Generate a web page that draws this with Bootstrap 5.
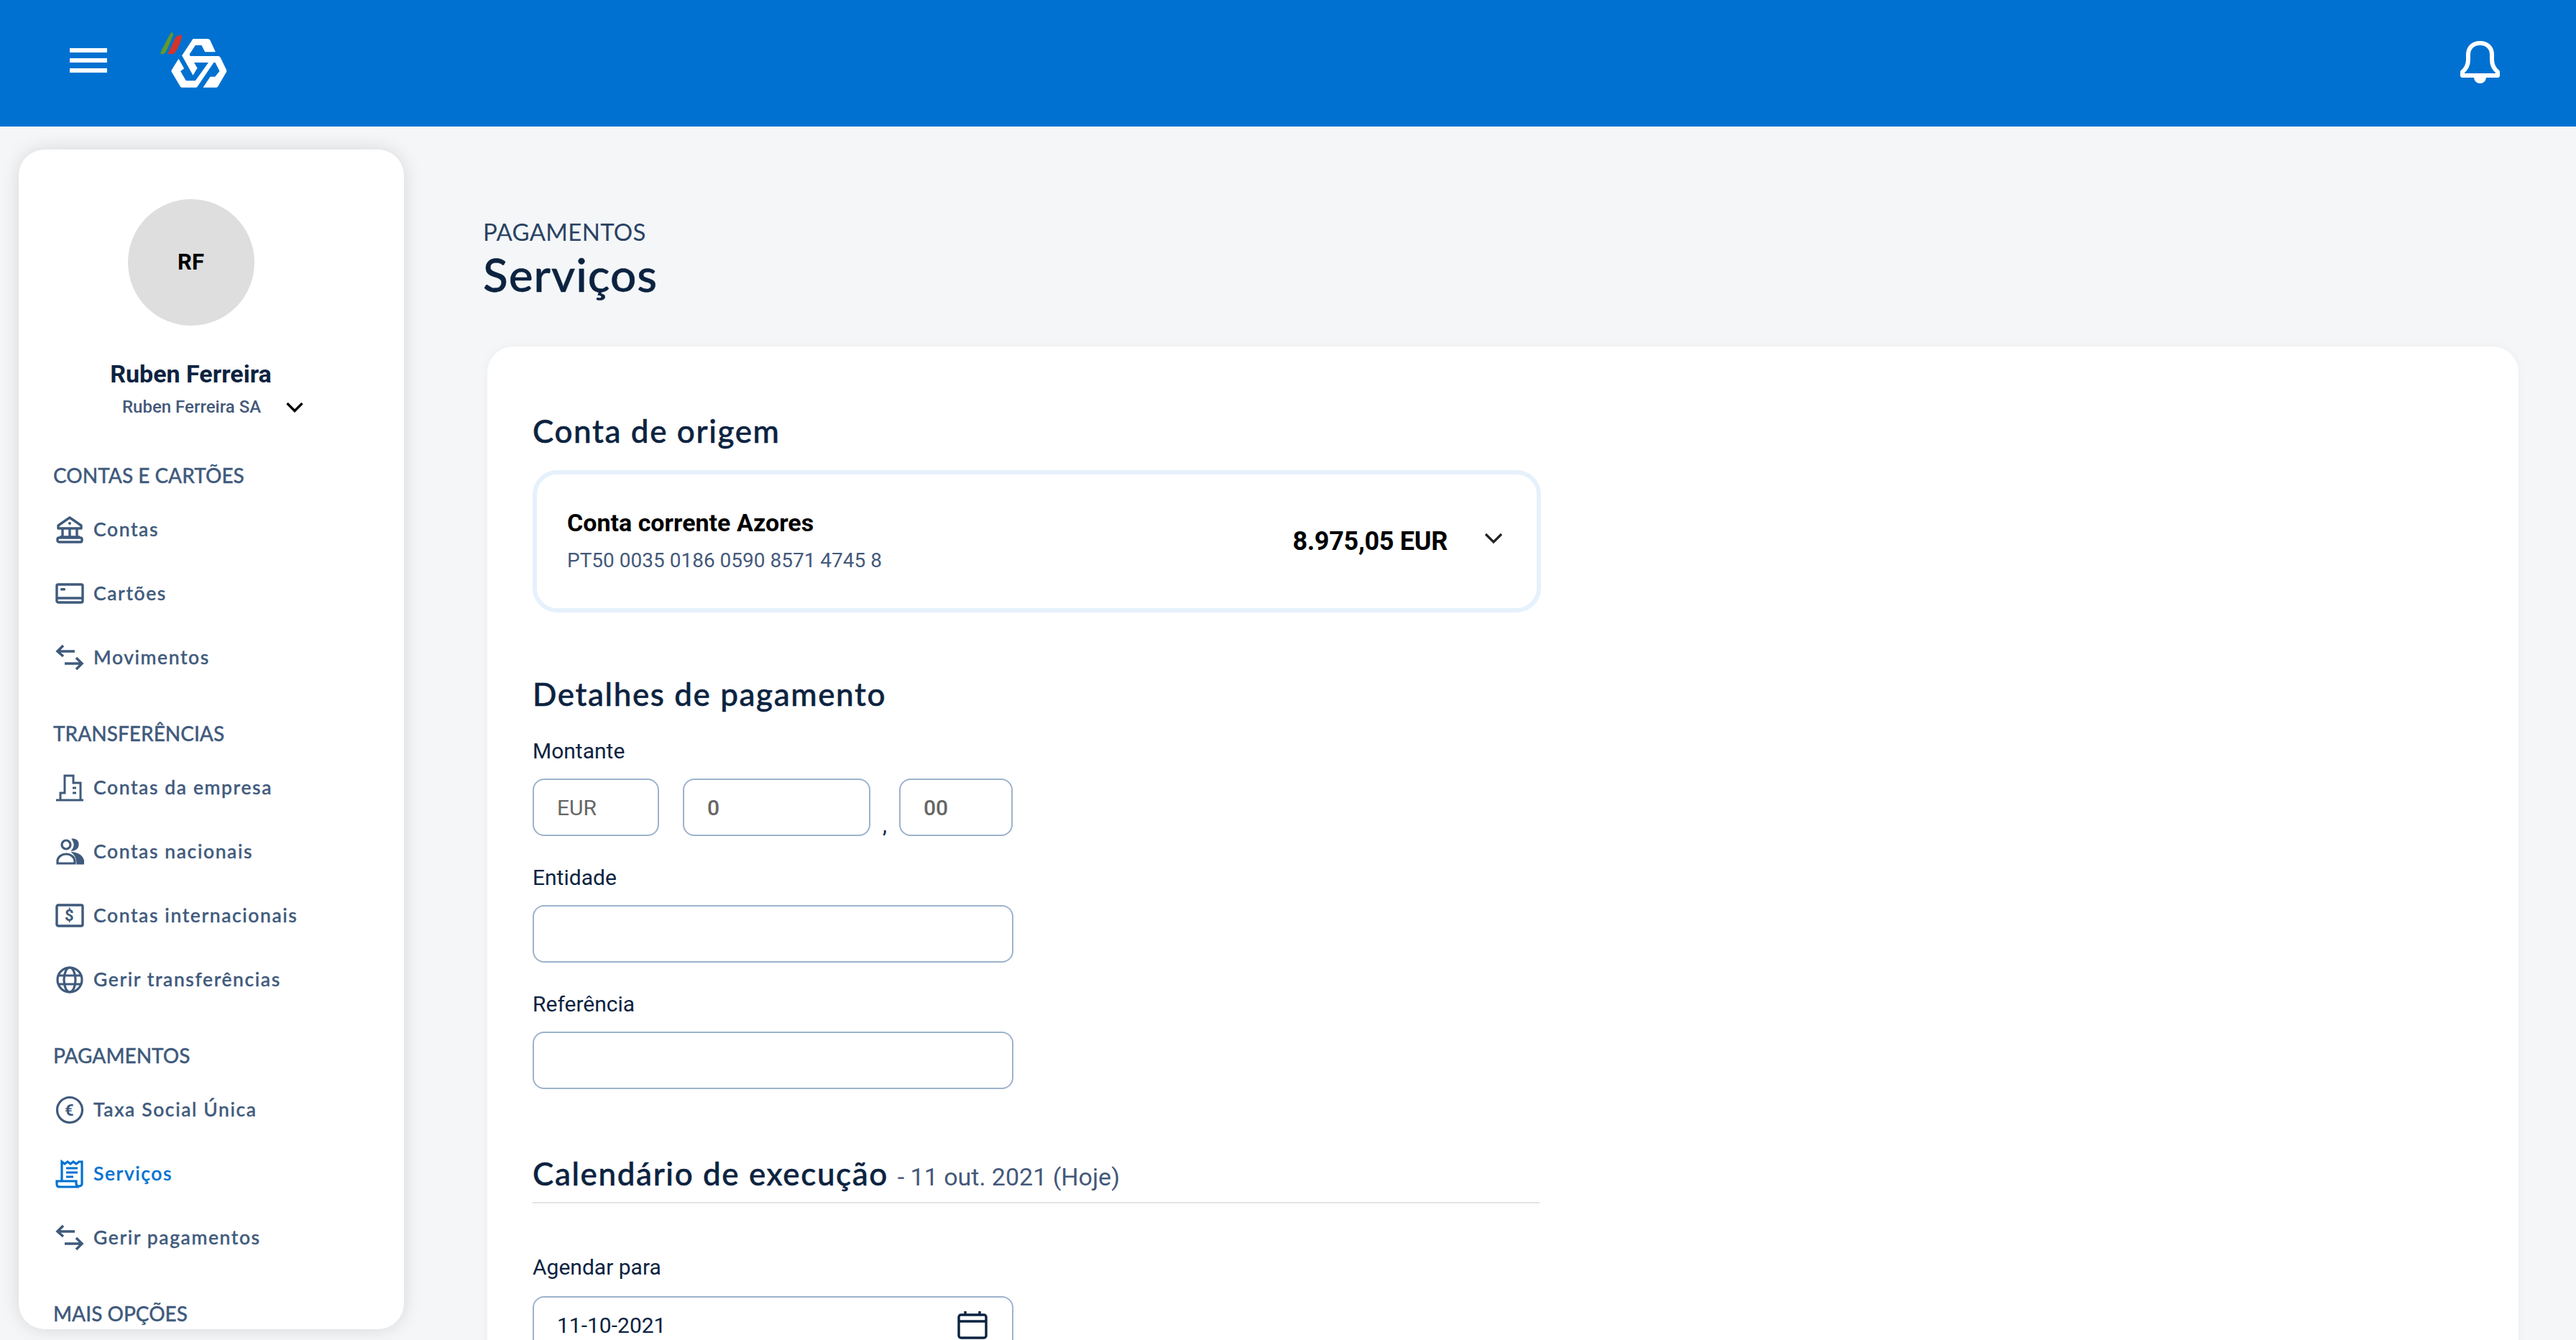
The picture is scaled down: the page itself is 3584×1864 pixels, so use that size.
<!DOCTYPE html>
<html lang="pt">
<head>
  <meta charset="UTF-8" />
  <meta name="viewport" content="width=device-width, initial-scale=1.0">
  <title>Serviços</title>
  <link href="https://cdn.jsdelivr.net/npm/bootstrap@5.3.0/dist/css/bootstrap.min.css" rel="stylesheet">
  <style>
    html, body { height: 1864px; overflow: hidden; }
    body { background: #f4f6f8; color: #0c2340; font-family: Roboto, "Liberation Sans", sans-serif; }
    .geo { font-family: Lato, "Noto Sans", sans-serif; }

    .app-bar { background: #0071d1; height: 176px; padding: 0 106px 8px 97px; }
    .burger { width: 52px; display: flex; flex-direction: column; gap: 8px; }
    .burger span { display: block; height: 6px; background: #fff; }
    .logo-mark { margin-left: 74px; }
    .bell-mark { margin-top: 8px; }

    .side-panel { width: 536px; height: 1641px; margin: 32px 0 0 26px; border: 0; border-radius: 36px; overflow: hidden; flex-shrink: 0; box-shadow: 0 0 26px rgba(0,0,0,.13); }
    .side-panel > * { flex-shrink: 0; }
    .profile { padding: 69px 57px 0 0; text-align: center; }
    .avatar { width: 176px; height: 176px; border-radius: 50%; background: #dedede; color: #000; font-size: 31px; font-weight: 700; }
    .user-name { margin-top: 47px; font-size: 34px; line-height: 40px; font-weight: 700; }
    .user-sub { margin-top: 11px; padding-left: 144px; gap: 35px; font-size: 24px; line-height: 30px; font-weight: 500; color: #44597a; }
    .menu-title { margin: 43px 0 13px 48px; font-size: 28px; line-height: 36px; color: #3f5a7c; font-weight: 500; -webkit-text-stroke: .3px #3f5a7c; }
    .menu-title.first { margin-top: 62px; }
    .menu-row { height: 89px; padding-left: 51px; gap: 13px; font-size: 26.5px; letter-spacing: 1.6px; color: #3f5a7c; font-weight: 500; text-decoration: none; -webkit-text-stroke: .4px currentColor; }
    .menu-row.on { color: #0071d1; }
    .menu-row svg { width: 40px; height: 40px; flex-shrink: 0; -webkit-text-stroke: 0; }

    .content { padding: 126px 80px 0 110px; min-width: 0; flex-grow: 1; }
    .crumb { font-size: 33px; line-height: 40px; color: #2a4263; letter-spacing: .3px; }
    .page-name { font-size: 64px; line-height: 70px; font-weight: 500; margin: 5px 0 0; color: #0c2340; letter-spacing: 1px; -webkit-text-stroke: .5px #0c2340; }
    .main-panel { margin: 65px 0 0 6px; height: 1500px; border: 0; border-radius: 36px; padding: 89px 0 0 63px; box-shadow: 0 0 14px rgba(0,0,0,.04); }
    .inner { width: 1403px; }
    .block-title { font-size: 44px; line-height: 56px; font-weight: 500; margin: 0; color: #0c2340; letter-spacing: 1.6px; -webkit-text-stroke: .5px #0c2340; }
    .acct-box { margin-top: 27px; height: 198px; border: 6px solid #e5f1fc; border-radius: 34px; padding: 0 47px 0 42px; }
    .acct-name { font-size: 34px; line-height: 40px; font-weight: 700; color: #000; margin-top: -2px; }
    .acct-iban { margin-top: 16px; font-size: 28px; line-height: 34px; color: #44597a; }
    .acct-sum { font-size: 36px; font-weight: 700; color: #000; margin-right: 51px; letter-spacing: -.3px; }
    .fields { width: 669px; }
    .fld-label { font-size: 30px; line-height: 36px; margin: 0 0 20px; display: block; color: #0c2340; }
    .fld { height: 80px; border: 2.5px solid #9db2cc; border-radius: 16px; padding: 0 32px; font-size: 30px; color: #666; box-shadow: none; }
    .fld.strong { font-weight: 500; }
    .cur { width: 176px; flex-shrink: 0; }
    .whole { width: 261px; flex-shrink: 0; margin-left: 33px; }
    .dec { width: 158px; flex-shrink: 0; }
    .comma { width: 40px; text-align: center; font-size: 30px; line-height: 1; padding-top: 50px; }
    .sub-note { font-family: Roboto, sans-serif; font-size: 34px; font-weight: 400; color: #44597a; letter-spacing: 0; -webkit-text-stroke: 0; }
    .rule { margin: 7px 0 71px; border: 0; border-top: 2.5px solid #e3e3e3; opacity: 1; width: 1401px; }
    .cal-mark { position: absolute; right: 36px; top: 20px; }
  </style>
</head>
<body>
  <!-- Top bar -->
  <nav class="navbar app-bar d-flex justify-content-between align-items-center">
    <div class="d-flex align-items-center">
      <div class="burger"><span></span><span></span><span></span></div>
      <svg class="logo-mark" width="97" height="80" viewBox="490 70 290 240">
        <path d="M491 156 C505 130 520 98 533 76 C538 71 545 74 543 84 C535 105 525 130 513 153 C506 167 488 167 491 156Z" fill="#5f9a2c"/>
        <path d="M520 163 C533 142 545 110 556 88 L566 90 L570 82 L580 86 L577 104 C569 125 562 145 550 159 C542 165 530 164 520 163Z" fill="#d4342a"/>
        <g fill="#fff">
          <path d="M626 100 H686 C692 100 695 102 698 107 L720 155 H676 L662 127 H636 L611 165 L644 222 L626 252 L580 170 Z"/>
          <path d="M606 172 H730 C736 172 738 174 741 179 L765 228 C767 233 767 237 764 241 L731 297 C729 301 726 303 721 303 H668 L698 258 H718 L737 235 L719 199 H624 Z"/>
          <path d="M566 183 L589 224 L574 235 L597 275 H636 L692 197 H714 L646 297 C643 302 640 303 636 303 H582 C577 303 574 301 572 297 L538 240 C535 235 535 232 538 228 Z"/>
        </g>
      </svg>
    </div>
    <svg class="bell-mark" width="55" height="62" viewBox="0 0 55 62" fill="none" stroke="#fff" stroke-width="6" stroke-linejoin="round">
      <path d="M3 48 V43 C9 38 11 33 11 26 V19 C11 9 18 3 27.5 3 C37 3 44 9 44 19 V26 C44 33 46 38 52 43 V48 Z"/>
      <path d="M19 50 C19 62 36 62 36 50Z" fill="#fff" stroke="none"/>
    </svg>
  </nav>

  <div class="d-flex align-items-start">
    <!-- Sidebar -->
    <aside class="card side-panel">
      <div class="profile">
        <div class="avatar d-flex align-items-center justify-content-center mx-auto">RF</div>
        <div class="user-name">Ruben Ferreira</div>
      </div>
      <div class="user-sub d-flex align-items-center">
        <span>Ruben Ferreira SA</span>
        <svg width="24" height="15" viewBox="0 0 24 15" fill="none" stroke="#000" stroke-width="3.4"><path d="M1.5 2 L12 12.5 L22.5 2"/></svg>
      </div>

      <div class="menu-title first geo">CONTAS E CARTÕES</div>
      <a class="menu-row d-flex align-items-center geo" href="#">
        <svg viewBox="0 0 40 40" fill="none" stroke="currentColor" stroke-width="3.4"><path d="M20 3 L36 14 V18 H4 V14 Z" stroke-linejoin="round"/><circle cx="20" cy="11" r="2" fill="currentColor" stroke="none"/><path d="M10 18 V30 M20 18 V30 M30 18 V30 M6 30 H34"/><rect x="3" y="31" width="34" height="6" rx="2"/></svg>
        <span>Contas</span>
      </a>
      <a class="menu-row d-flex align-items-center geo" href="#">
        <svg viewBox="0 0 40 40" fill="none" stroke="currentColor" stroke-width="3.4"><rect x="2" y="7" width="36" height="25" rx="2"/><path d="M2 26 H38"/><rect x="7" y="12" width="7" height="3.4" rx="1.5" fill="currentColor" stroke="none"/></svg>
        <span>Cartões</span>
      </a>
      <a class="menu-row d-flex align-items-center geo" href="#">
        <svg viewBox="0 0 40 40" fill="none" stroke="currentColor" stroke-width="3.6"><path d="M27 11 H4 M11 3 L3 11 L11 18"/><path d="M13 28 H37 M29 20 L37 28 L29 36"/></svg>
        <span>Movimentos</span>
      </a>

      <div class="menu-title geo">TRANSFERÊNCIAS</div>
      <a class="menu-row d-flex align-items-center geo" href="#">
        <svg viewBox="0 0 40 40" fill="none" stroke="currentColor" stroke-width="3"><path d="M1 37 H39 M7 37 V27 H13 V3 H25 V13 H35 V37"/><path d="M24 20 H29 M24 27 H29" stroke-width="3.2"/></svg>
        <span>Contas da empresa</span>
      </a>
      <a class="menu-row d-flex align-items-center geo" href="#">
        <svg viewBox="0 0 40 40" fill="none" stroke="currentColor" stroke-width="3.2"><circle cx="15" cy="10" r="6"/><path d="M3 36 V33 C3 27 9 23 15 23 C21 23 27 27 27 33 V36 Z"/><path d="M25 3 C33 3 33 16 25 17 C28 13 28 8 25 3Z" fill="currentColor"/><path d="M26 22 C33 23 39 28 39 36 H31 C31 30 30 26 26 22Z" fill="currentColor"/></svg>
        <span>Contas nacionais</span>
      </a>
      <a class="menu-row d-flex align-items-center geo" href="#">
        <svg viewBox="0 0 40 40" fill="none" stroke="currentColor" stroke-width="3.4"><rect x="2" y="5" width="36" height="29" rx="2"/><text x="20" y="27" text-anchor="middle" font-family="Roboto, sans-serif" font-size="22" font-weight="700" fill="currentColor" stroke="none">$</text></svg>
        <span>Contas internacionais</span>
      </a>
      <a class="menu-row d-flex align-items-center geo" href="#">
        <svg viewBox="0 0 40 40" fill="none" stroke="currentColor" stroke-width="3.2"><circle cx="20" cy="20" r="17"/><ellipse cx="20" cy="20" rx="8" ry="17"/><path d="M4 14 H36 M4 26 H36"/></svg>
        <span>Gerir transferências</span>
      </a>

      <div class="menu-title geo">PAGAMENTOS</div>
      <a class="menu-row d-flex align-items-center geo" href="#">
        <svg viewBox="0 0 40 40" fill="none" stroke="currentColor" stroke-width="3.2"><circle cx="20" cy="20" r="17.5"/><text x="20" y="27.5" text-anchor="middle" font-family="Roboto, sans-serif" font-size="22" font-weight="700" fill="currentColor" stroke="none">€</text></svg>
        <span>Taxa Social Única</span>
      </a>
      <a class="menu-row on d-flex align-items-center geo" href="#">
        <svg viewBox="0 0 40 40" fill="none" stroke="currentColor" stroke-width="3.2"><path d="M9 29 V3 L13 6 L17 3 L21 6 L25 3 L29 6 L33 3 L37 3 V34 C37 38 29 38 29 34 V30 H2 V34 C2 38 4 38 7 38 H33"/><path d="M15 12 H31 M15 18 H31 M15 24 H25"/></svg>
        <span>Serviços</span>
      </a>
      <a class="menu-row d-flex align-items-center geo" href="#">
        <svg viewBox="0 0 40 40" fill="none" stroke="currentColor" stroke-width="3.6"><path d="M27 11 H4 M11 3 L3 11 L11 18"/><path d="M13 28 H37 M29 20 L37 28 L29 36"/></svg>
        <span>Gerir pagamentos</span>
      </a>

      <div class="menu-title geo">MAIS OPÇÕES</div>
    </aside>

    <!-- Main -->
    <main class="content">
      <div class="crumb geo">PAGAMENTOS</div>
      <h1 class="page-name geo">Serviços</h1>

      <div class="card main-panel">
        <div class="inner">
          <h2 class="block-title geo">Conta de origem</h2>
          <div class="acct-box d-flex align-items-center">
            <div class="flex-grow-1">
              <div class="acct-name">Conta corrente Azores</div>
              <div class="acct-iban">PT50 0035 0186 0590 8571 4745 8</div>
            </div>
            <div class="acct-sum">8.975,05 EUR</div>
            <svg class="mb-2" width="26" height="16" viewBox="0 0 26 16" fill="none" stroke="#222" stroke-width="3.2"><path d="M2 2 L13 13 L24 2"/></svg>
          </div>

          <h2 class="block-title geo" style="margin-top:85px">Detalhes de pagamento</h2>
          <div class="fields">
            <label class="fld-label" style="margin-top:34px">Montante</label>
            <div class="d-flex">
              <input class="form-control fld cur" value="EUR">
              <input class="form-control fld strong whole" value="0">
              <div class="comma">,</div>
              <input class="form-control fld strong dec" value="00">
            </div>
            <label class="fld-label" style="margin-top:40px">Entidade</label>
            <input class="form-control fld">
            <label class="fld-label" style="margin-top:40px">Referência</label>
            <input class="form-control fld">
          </div>

          <h2 class="block-title geo" style="margin-top:89px">Calendário de execução <span class="sub-note">- 11 out. 2021 (Hoje)</span></h2>
          <hr class="rule">
          <div class="fields">
            <label class="fld-label" style="margin-bottom:22px">Agendar para</label>
            <div class="position-relative">
              <input class="form-control fld" style="color:#0c2340" value="11-10-2021">
              <svg class="cal-mark" width="42" height="40" viewBox="0 0 42 40" fill="none" stroke="#0c2340" stroke-width="3.4"><rect x="2" y="6" width="38" height="32" rx="3"/><path d="M2 15 H40 M11 1 V7 M31 1 V7"/></svg>
            </div>
          </div>
        </div>
      </div>
    </main>
  </div>

  <script src="https://cdn.jsdelivr.net/npm/bootstrap@5.3.0/dist/js/bootstrap.bundle.min.js"></script>
</body>
</html>
